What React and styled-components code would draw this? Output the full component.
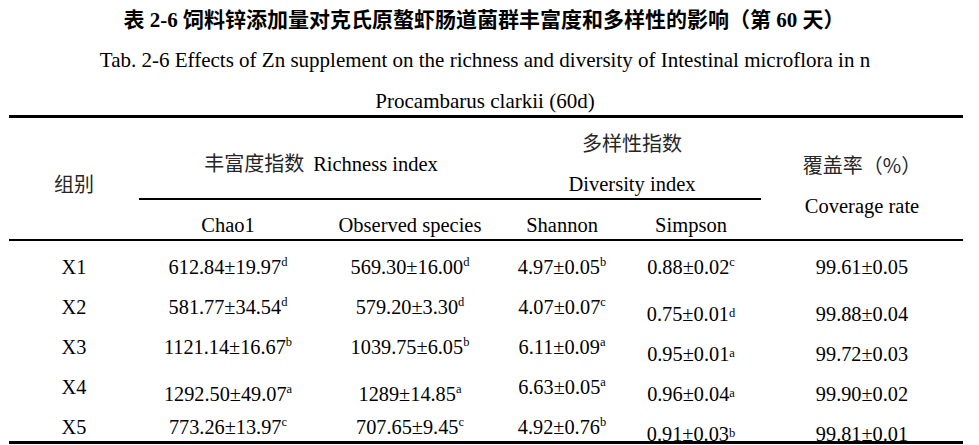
import React from 'react';
import styled, { createGlobalStyle } from 'styled-components';

const GlobalStyle = createGlobalStyle`
  html, body { margin: 0; padding: 0; background: #fff; }
  body {
    width: 979px;
    height: 445px;
    overflow: hidden;
    font-family: "Liberation Serif", "Noto Sans CJK SC", serif;
    color: #000;
  }
`;

const COLS = '130px 178px 186px 118px 140px 202px';

const Page = styled.div`
  width: 979px;
`;

const Caption = styled.div`
  height: 115px;
  width: 970px;
  text-align: center;
`;

const TitleCn = styled.div`
  font-family: "Liberation Serif", "Noto Sans CJK SC", sans-serif;
  font-size: 21px;
  font-weight: 700;
  line-height: 40px;
  padding-left: 2px;
  padding-right: 4px;
  white-space: nowrap;
`;

const TitleEn = styled.div`
  font-size: 21px;
  line-height: 41px;
  white-space: nowrap;
`;

const Table = styled.div`
  margin-left: 9px;
  width: 954px;
  border-top: 3px solid #000;
  border-bottom: 3px solid #000;
`;

const Head = styled.div`
  display: grid;
  grid-template-columns: ${COLS};
  grid-template-rows: 82px 39px;
  border-bottom: 2px solid #000;
`;

const HeadCell = styled.div`
  grid-column: ${p => p.$col};
  grid-row: ${p => p.$row};
  box-sizing: border-box;
  text-align: center;
  padding-top: ${p => p.$top}px;
  line-height: ${p => p.$lh || 24}px;
  font-size: 20.5px;
  white-space: nowrap;
  border-bottom: ${p => (p.$rule ? '2px solid #000' : 'none')};
`;

const Cn = styled.span`
  font-family: "Noto Sans CJK SC", sans-serif;
  font-size: 20px;
  color: #262626;
  margin-right: ${p => p.$gap || 0}px;
`;

const Row = styled.div`
  display: grid;
  grid-template-columns: ${COLS};
  height: 40px;
`;

const Cell = styled.div`
  box-sizing: border-box;
  height: 40px;
  padding-top: ${p => (p.$drop ? 21 : 14)}px;
  line-height: 24px;
  font-size: 20.3px;
  text-align: center;
  white-space: nowrap;
`;

const Sup = styled.sup`
  font-size: 12.5px;
  line-height: 0;
  vertical-align: ${p => (p.$low ? '4px' : '8px')};
`;

const rows = [
  { g: 'X1', v: [['612.84±19.97', 'd'], ['569.30±16.00', 'd'], ['4.97±0.05', 'b'], ['0.88±0.02', 'c'], ['99.61±0.05']], drop: [], low: [] },
  { g: 'X2', v: [['581.77±34.54', 'd'], ['579.20±3.30', 'd'], ['4.07±0.07', 'c'], ['0.75±0.01', 'd'], ['99.88±0.04']], drop: [3, 4], low: [3] },
  { g: 'X3', v: [['1121.14±16.67', 'b'], ['1039.75±6.05', 'b'], ['6.11±0.09', 'a'], ['0.95±0.01', 'a'], ['99.72±0.03']], drop: [3, 4], low: [3] },
  { g: 'X4', v: [['1292.50±49.07', 'a'], ['1289±14.85', 'a'], ['6.63±0.05', 'a'], ['0.96±0.04', 'a'], ['99.90±0.02']], drop: [0, 1, 3, 4], low: [3] },
  { g: 'X5', v: [['773.26±13.97', 'c'], ['707.65±9.45', 'c'], ['4.92±0.76', 'b'], ['0.91±0.03', 'b'], ['99.81±0.01']], drop: [3, 4], low: [3] },
];

export default function App() {
  return (
    <Page>
      <GlobalStyle />
      <Caption>
        <TitleCn>表 2-6 饲料锌添加量对克氏原螯虾肠道菌群丰富度和多样性的影响（第 60 天）</TitleCn>
        <TitleEn>
          Tab. 2-6 Effects of Zn supplement on the richness and diversity of Intestinal microflora in n
          <br />
          Procambarus clarkii (60d)
        </TitleEn>
      </Caption>
      <Table>
        <Head>
          <HeadCell $col="1" $row="1 / span 2" $top={54}>
            <Cn>组别</Cn>
          </HeadCell>
          <HeadCell $col="2 / span 2" $row="1" $top={33} $rule>
            <Cn $gap={9}>丰富度指数</Cn>Richness index
          </HeadCell>
          <HeadCell $col="4 / span 2" $row="1" $top={5} $lh={40} $rule>
            <Cn>多样性指数</Cn>
            <br />
            Diversity index
          </HeadCell>
          <HeadCell $col="6" $row="1 / span 2" $top={27} $lh={40}>
            <Cn>覆盖率（%）</Cn>
            <br />
            Coverage rate
          </HeadCell>
          <HeadCell $col="2" $row="2" $top={13}>Chao1</HeadCell>
          <HeadCell $col="3" $row="2" $top={13}>Observed species</HeadCell>
          <HeadCell $col="4" $row="2" $top={13}>Shannon</HeadCell>
          <HeadCell $col="5" $row="2" $top={13}>Simpson</HeadCell>
        </Head>
        {rows.map(r => (
          <Row key={r.g}>
            <Cell>{r.g}</Cell>
            {r.v.map(([val, sup], i) => (
              <Cell key={i} $drop={r.drop.includes(i)}>
                {val}
                {sup && <Sup $low={r.low.includes(i)}>{sup}</Sup>}
              </Cell>
            ))}
          </Row>
        ))}
      </Table>
    </Page>
  );
}
